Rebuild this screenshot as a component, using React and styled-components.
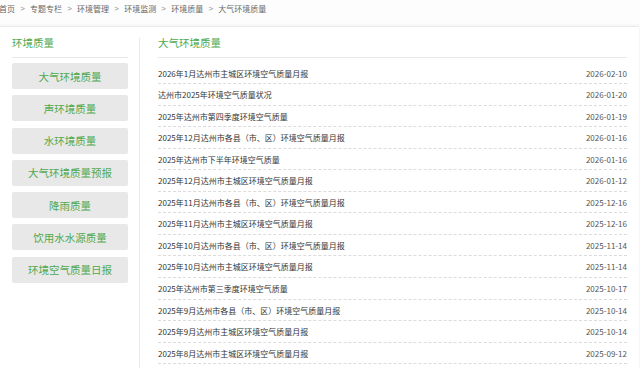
import React from "react";
import styled, { createGlobalStyle } from "styled-components";

const Global = createGlobalStyle`
  html, body { margin: 0; padding: 0; background: #fff; overflow: hidden; }
  body { font-family: "Noto Sans CJK SC", "Noto Sans", sans-serif; }
  * { box-sizing: border-box; }
`;

const Page = styled.div`
  width: 640px;
  height: 368px;
  overflow: hidden;
  background: #fdfdfd;
`;

const Crumbs = styled.div`
  height: 26px;
  display: flex;
  align-items: center;
  margin-left: -1px;
  padding-bottom: 8px;
  font-size: 8px;
  line-height: 10px;
  color: #666;
`;

const Sep = styled.span`
  margin: 0 5.2px;
  color: #888;
  font-family: "Liberation Sans", sans-serif;
`;

const Card = styled.div`
  margin-left: -4px;
  width: 643px;
  height: 400px;
  background: #fff;
  border-top: 1px solid #ebebeb;
  box-shadow: 0 0 4px rgba(0, 0, 0, 0.08);
  display: flex;
  padding: 11px 12px 0 16px;
`;

const Side = styled.div`
  width: 116px;
  margin-right: 11px;
  flex-shrink: 0;
`;

const Main = styled.div`
  flex: 1;
  border-left: 1px solid #e9e9e9;
  padding-left: 18px;
`;

const Heading = styled.div`
  font-size: 10.5px;
  line-height: 10px;
  color: #4fa94f;
  padding-bottom: 9px;
  border-bottom: 1px solid #e8e8e8;
`;

const Menu = styled.div`
  display: flex;
  flex-direction: column;
  gap: 6.3px;
  margin-top: 5px;
`;

const MenuBtn = styled.div`
  height: 26px;
  border-radius: 2px;
  background: #e8e8e8;
  color: #4fa94f;
  font-size: 10.5px;
  display: flex;
  align-items: center;
  justify-content: center;
`;

const List = styled.div`
  margin-top: 4.5px;
`;

const Row = styled.div`
  height: 21.55px;
  border-bottom: 1px dashed #dcdcdc;
  display: flex;
  align-items: center;
  justify-content: space-between;
  font-size: 8px;
  padding-top: 0.5px;
`;

const Title = styled.span`
  color: #333;
`;

const DateText = styled.span`
  color: #555;
`;

const crumbs = ["首页", "专题专栏", "环境管理", "环境监测", "环境质量", "大气环境质量"];

const menu = [
  "大气环境质量",
  "声环境质量",
  "水环境质量",
  "大气环境质量预报",
  "降雨质量",
  "饮用水水源质量",
  "环境空气质量日报",
];

const rows = [
  ["2026年1月达州市主城区环境空气质量月报", "2026-02-10"],
  ["达州市2025年环境空气质量状况", "2026-01-20"],
  ["2025年达州市第四季度环境空气质量", "2026-01-19"],
  ["2025年12月达州市各县（市、区）环境空气质量月报", "2026-01-16"],
  ["2025年达州市下半年环境空气质量", "2026-01-16"],
  ["2025年12月达州市主城区环境空气质量月报", "2026-01-12"],
  ["2025年11月达州市各县（市、区）环境空气质量月报", "2025-12-16"],
  ["2025年11月达州市主城区环境空气质量月报", "2025-12-16"],
  ["2025年10月达州市各县（市、区）环境空气质量月报", "2025-11-14"],
  ["2025年10月达州市主城区环境空气质量月报", "2025-11-14"],
  ["2025年达州市第三季度环境空气质量", "2025-10-17"],
  ["2025年9月达州市各县（市、区）环境空气质量月报", "2025-10-14"],
  ["2025年9月达州市主城区环境空气质量月报", "2025-10-14"],
  ["2025年8月达州市主城区环境空气质量月报", "2025-09-12"],
];

export default function App() {
  return (
    <Page>
      <Global />
      <Crumbs>
        {crumbs.map((c, i) => (
          <React.Fragment key={c}>
            {i > 0 && <Sep>&gt;</Sep>}
            <span>{c}</span>
          </React.Fragment>
        ))}
      </Crumbs>
      <Card>
        <Side>
          <Heading>环境质量</Heading>
          <Menu>
            {menu.map((m) => (
              <MenuBtn key={m}>{m}</MenuBtn>
            ))}
          </Menu>
        </Side>
        <Main>
          <Heading>大气环境质量</Heading>
          <List>
            {rows.map(([t, d], i) => (
              <Row key={i}>
                <Title>{t}</Title>
                <DateText>{d}</DateText>
              </Row>
            ))}
          </List>
        </Main>
      </Card>
    </Page>
  );
}
